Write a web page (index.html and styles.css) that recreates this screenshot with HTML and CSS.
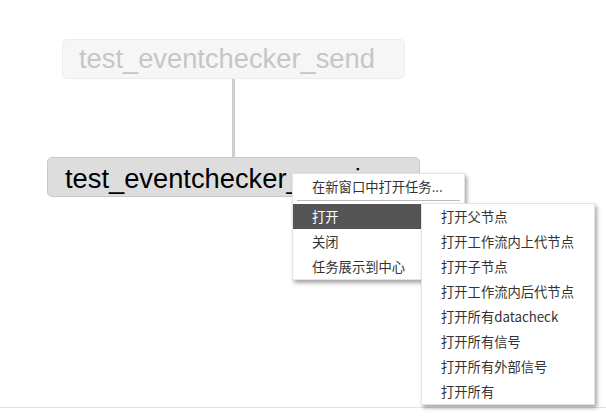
FILE: index.html
```html
<!DOCTYPE html>
<html>
<head>
<meta charset="utf-8">
<link rel="stylesheet" href="styles.css">
</head>
<body>
<div class="canvas">
  <div class="node node-parent">test_eventchecker_send</div>
  <div class="edge"></div>
  <div class="node node-current">test_eventchecker_receive</div>
  <div class="baseline"></div>

  <ul class="menu menu-main">
    <li class="item first">在新窗口中打开任务...</li>
    <li class="sep"></li>
    <li class="item active">打开</li>
    <li class="item">关闭</li>
    <li class="item">任务展示到中心</li>
  </ul>

  <ul class="menu menu-sub">
    <li class="item">打开父节点</li>
    <li class="item">打开工作流内上代节点</li>
    <li class="item">打开子节点</li>
    <li class="item">打开工作流内后代节点</li>
    <li class="item">打开所有datacheck</li>
    <li class="item">打开所有信号</li>
    <li class="item">打开所有外部信号</li>
    <li class="item">打开所有</li>
  </ul>
</div>
</body>
</html>
```

FILE: styles.css
```css
html, body {
  margin: 0;
  padding: 0;
  background: #fff;
}

.canvas {
  position: relative;
  width: 606px;
  height: 419px;
  overflow: hidden;
}

.node {
  position: absolute;
  z-index: 1;
  box-sizing: border-box;
  font-family: "Liberation Sans", Arial, sans-serif;
  font-size: 27.3px;
  line-height: 38px;
  padding-top: 2px;
  padding-left: 16px;
  white-space: nowrap;
  overflow: hidden;
  border-radius: 5px;
}

.node-parent {
  left: 62px;
  top: 39px;
  width: 343px;
  height: 40px;
  background: #f6f6f6;
  border: 1px solid #ececec;
  color: #c6c6c6;
  padding-top: 0;
}

.node-current {
  left: 47px;
  top: 157px;
  width: 373px;
  height: 40px;
  background: #dddddd;
  border: 1px solid #c8c8c8;
  color: #000;
  padding-left: 17px;
}

.edge {
  position: absolute;
  left: 232px;
  top: 79px;
  width: 3px;
  height: 78px;
  background: #cfcfcf;
}

.baseline {
  position: absolute;
  left: 0;
  top: 407px;
  width: 606px;
  height: 1px;
  background: #e2e2e2;
}

.menu {
  position: absolute;
  margin: 0;
  padding: 0;
  list-style: none;
  box-sizing: border-box;
  background: #fff;
  border: 1px solid #e4e4e4;
  box-shadow: 2px 3px 4px rgba(0, 0, 0, 0.35);
  font-family: "Noto Sans CJK SC", "Liberation Sans", sans-serif;
  font-size: 13.3px;
  color: #333;
}

.menu .item {
  height: 25px;
  line-height: 25px;
  padding-left: 19px;
  white-space: nowrap;
}

.menu .item.first {
  height: 26px;
  line-height: 25px;
}

.menu .sep {
  height: 1px;
  margin: 0 4px 3px 4px;
  background: #bdbdbd;
}

.menu .item.active {
  background: #555;
  color: #fff;
}

.menu-main {
  left: 292px;
  top: 173px;
  width: 173px;
  z-index: 5;
}

.menu-sub {
  left: 421px;
  top: 203px;
  width: 174px;
  z-index: 6;
}
```
